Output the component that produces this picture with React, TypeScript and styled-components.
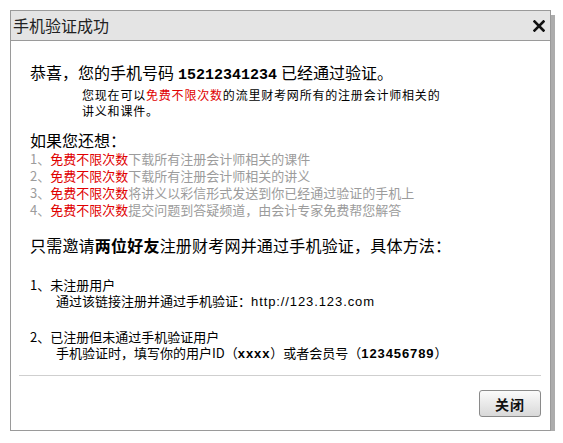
import React from "react";
import styled, { createGlobalStyle } from "styled-components";

const Global = createGlobalStyle`
  html, body { margin: 0; padding: 0; background: #fff; }
  body { font-family: "Liberation Sans", "Noto Sans CJK SC", sans-serif; color: #000; }
`;

const Page = styled.div`
  padding: 10px 0 0 10px;
`;

const Dialog = styled.div`
  width: 539px;
  border: 1px solid #9a9a9a;
  background: #fff;
  box-shadow: 4px 5px 0 0 #acacac;
`;

const Header = styled.div`
  height: 29px;
  background: #e4e4e4;
  border-bottom: 1px solid #9a9a9a;
  display: flex;
  align-items: center;
  justify-content: space-between;
  padding: 0 4px 0 2px;
`;

const Title = styled.div`
  font-family: "Noto Sans CJK SC", sans-serif;
  font-size: 16px;
  color: #222;
  line-height: 29px;
`;

const CloseX = styled.svg`
  width: 12px;
  height: 12px;
  margin-right: 1px;
`;

const Body = styled.div`
  padding: 21px 20px 0 19px;
  font-family: "Noto Sans CJK SC", sans-serif;
`;

const Big = styled.div<{ $mt?: number; $lh?: number }>`
  font-size: 16px;
  line-height: ${(p) => p.$lh ?? 20}px;
  margin-top: ${(p) => p.$mt ?? 0}px;
  white-space: nowrap;
`;

const Invite = styled(Big)`
  letter-spacing: 0.2px;
`;

const Phone = styled.b`
  font-family: "Liberation Mono", monospace;
  font-size: 15px;
  font-weight: bold;
  margin: 0 4px;
`;

const Note = styled.div`
  font-size: 12px;
  line-height: 16px;
  margin: 1px 0 0 52px;
  white-space: nowrap;
  letter-spacing: 0.8px;
`;

const Red = styled.span`
  color: #e00000;
`;

const List = styled.ol`
  list-style: none;
  margin: 1px 0 0;
  padding: 0;
  font-size: 13px;
  line-height: 17px;
  color: #9c9c9c;
`;

const Item = styled.li`
  white-space: nowrap;
`;

const Strong = styled.b`
  font-weight: bold;
`;

const Method = styled.div<{ $mt: number }>`
  font-size: 13px;
  line-height: 16px;
  margin-top: ${(p) => p.$mt}px;
`;

const Indent = styled.div`
  padding-left: 26px;
  white-space: nowrap;
`;

const Url = styled.span`
  font-family: "Liberation Sans", sans-serif;
  font-size: 13px;
  letter-spacing: 0.9px;
`;

const Mono = styled.b`
  font-family: "Liberation Sans", sans-serif;
  font-weight: bold;
  font-size: 13px;
  letter-spacing: 0.9px;
`;

const Footer = styled.div`
  margin: 13px 9px 0 8px;
  border-top: 1px solid #cfcfcf;
  padding: 14px 0 13px;
  display: flex;
  justify-content: flex-end;
`;

const Button = styled.button`
  width: 62px;
  height: 27px;
  border: 1px solid #8a8a8a;
  border-radius: 3px;
  background: linear-gradient(#fbfbfb, #e6e6e6 60%, #d9d9d9);
  font-family: "Noto Sans CJK SC", sans-serif;
  font-weight: bold;
  font-size: 14px;
  color: #111;
  padding: 0;
  letter-spacing: 1px;
  cursor: pointer;
`;

export default function App() {
  return (
    <>
      <Global />
      <Page>
        <Dialog>
          <Header>
            <Title>手机验证成功</Title>
            <CloseX viewBox="0 0 12 12">
              <path d="M1.5 1.5 L10.5 10.5 M10.5 1.5 L1.5 10.5" stroke="#111" strokeWidth="2.6" strokeLinecap="square" />
            </CloseX>
          </Header>
          <Body>
            <Big>
              恭喜，您的手机号码<Phone>15212341234</Phone>已经通过验证。
            </Big>
            <Note>
              您现在可以<Red>免费不限次数</Red>的流里财考网所有的注册会计师相关的
              <br />
              讲义和课件。
            </Note>
            <Big $mt={12} $lh={18}>如果您还想：</Big>
            <List>
              <Item>1、<Red>免费不限次数</Red>下载所有注册会计师相关的课件</Item>
              <Item>2、<Red>免费不限次数</Red>下载所有注册会计师相关的讲义</Item>
              <Item>3、<Red>免费不限次数</Red>将讲义以彩信形式发送到你已经通过验证的手机上</Item>
              <Item>4、<Red>免费不限次数</Red>提交问题到答疑频道，由会计专家免费帮您解答</Item>
            </List>
            <Invite $mt={17}>
              只需邀请<Strong>两位好友</Strong>注册财考网并通过手机验证，具体方法：
            </Invite>
            <Method $mt={22}>
              <div>1、未注册用户</div>
              <Indent>
                通过该链接注册并通过手机验证：<Url>http://123.123.com</Url>
              </Indent>
            </Method>
            <Method $mt={19}>
              <div>2、已注册但未通过手机验证用户</div>
              <Indent>
                手机验证时，填写你的用户ID（<Mono>xxxx</Mono>）或者会员号（<Mono>123456789</Mono>）
              </Indent>
            </Method>
          </Body>
          <Footer>
            <Button>关闭</Button>
          </Footer>
        </Dialog>
      </Page>
    </>
  );
}
